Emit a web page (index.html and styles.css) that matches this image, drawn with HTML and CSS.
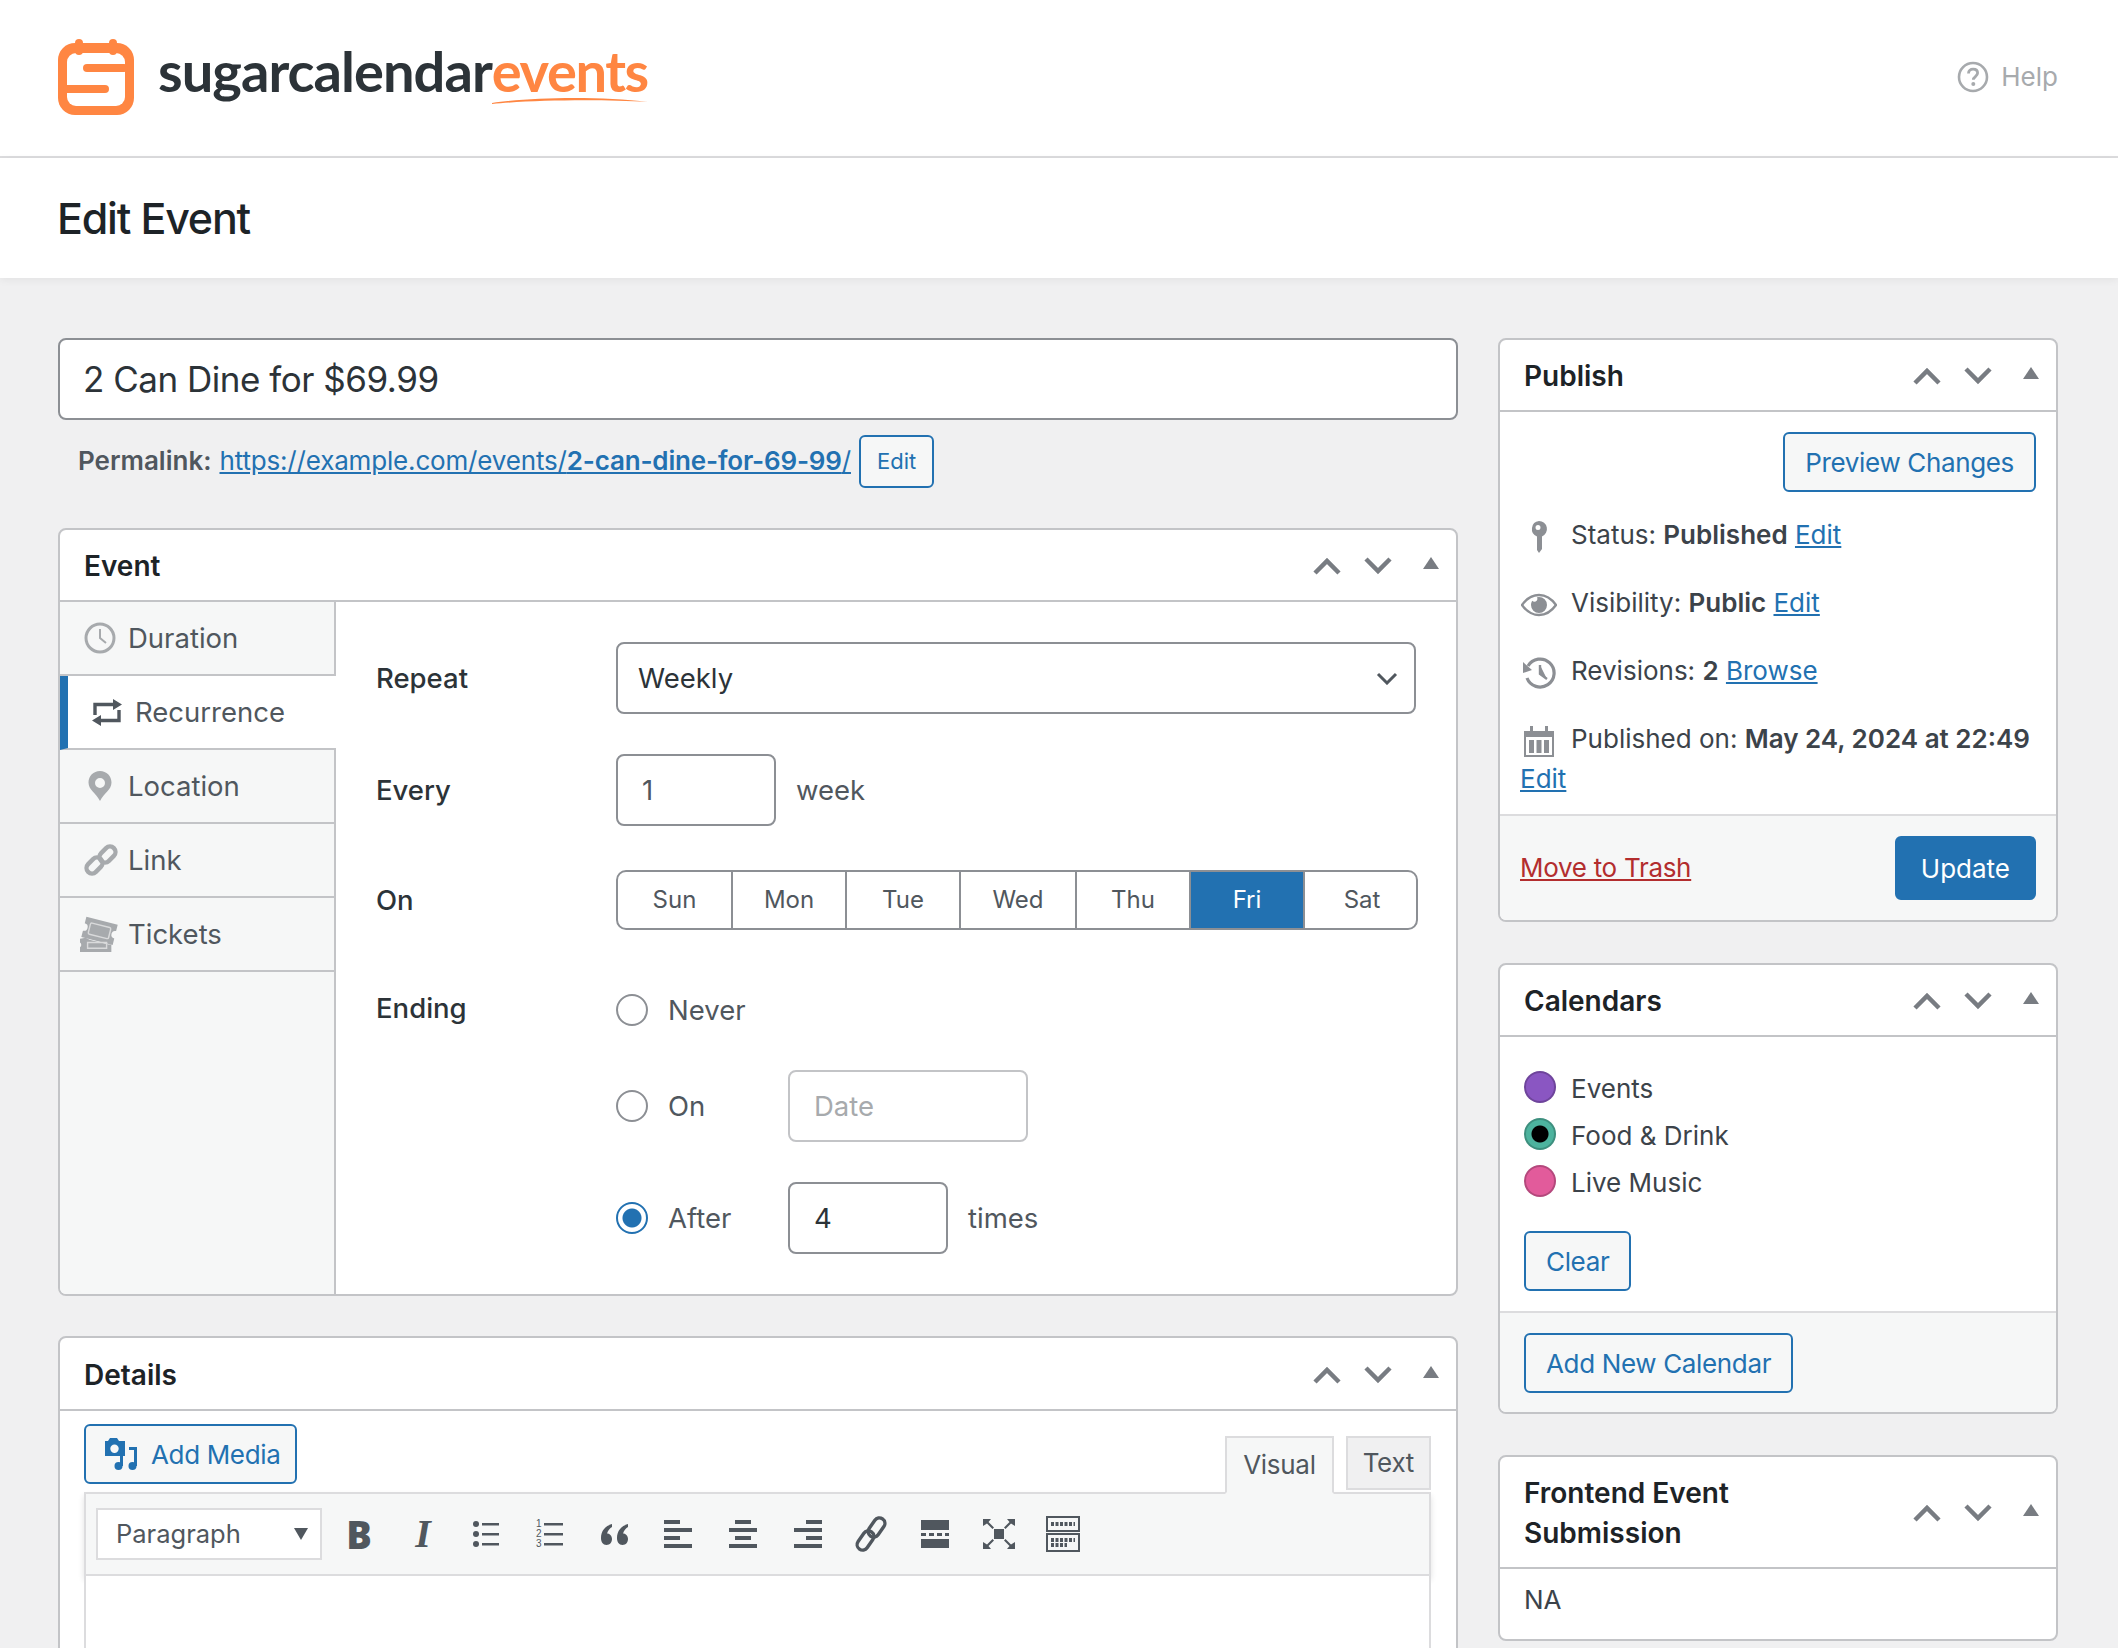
FILE: index.html
```html
<!DOCTYPE html>
<html lang="en">
<head>
  <meta charset="UTF-8" />
  <meta name="viewport" content="width=device-width, initial-scale=1.0"/>
  <title>Edit Event</title>
  <link rel="stylesheet" href="styles.css">
</head>
<body>
  <header class="topbar">
    <div class="brand">
      <svg class="brand-mark" viewBox="0 0 76 76">
        <rect y="4" width="76" height="72" rx="17" fill="#ff8642"/>
        <rect x="9" y="14" width="58" height="53" rx="9" fill="#fff"/>
        <rect x="25" y="25" width="45" height="8" rx="4" fill="#ff8642"/>
        <rect x="5" y="46" width="46" height="8" rx="4" fill="#ff8642"/>
        <rect x="17" y="0" width="8" height="16" rx="4" fill="#ff8642"/>
        <rect x="51" y="0" width="8" height="16" rx="4" fill="#ff8642"/>
      </svg>
      <span class="brand-name">sugarcalendar<span class="brand-events">events<svg class="brand-swoosh" viewBox="0 0 158 8" preserveAspectRatio="none"><path d="M0 7C40 1 110 0 158 6C110 3 40 4 0 8Z" fill="#ff8642"/></svg></span></span>
    </div>
    <div class="help">
      <svg width="32" height="32" viewBox="0 0 32 32"><circle cx="16" cy="16" r="14" fill="none" stroke="#a7aaad" stroke-width="2.6"/><path d="M11.5 12.5c0-2.700 2-4.300 4.600-4.300 2.700 0 4.500 1.600 4.500 3.900 0 3.400-4.300 3.500-4.300 6.700" fill="none" stroke="#a7aaad" stroke-width="2.800"/><circle cx="16.300" cy="23" r="2" fill="#a7aaad"/></svg>
      <span>Help</span>
    </div>
  </header>

  <div class="titlebar"><h1>Edit Event</h1></div>

  <div class="columns">
    <main>
      <div class="title-input">2 Can Dine for $69.99</div>
      <div class="permalink">
        <strong>Permalink:</strong>
        <a href="#">https://example.com/events/<b>2-can-dine-for-69-99</b>/</a>
        <button class="btn btn-small">Edit</button>
      </div>

      <section class="box box-event">
        <div class="box-head">
          <h2>Event</h2>
          <div class="handles">
            <svg class="chev" viewBox="0 0 28 18"><path d="M2 16L14 4L26 16" /></svg>
            <svg class="chev" viewBox="0 0 28 18"><path d="M2 2L14 14L26 2" /></svg>
            <svg class="tri" viewBox="0 0 16 12"><path d="M8 0L16 12H0Z"/></svg>
          </div>
        </div>
        <div class="event-body">
          <ul class="tabs">
            <li>
              <svg class="tab-icon" viewBox="0 0 32 32"><circle cx="16" cy="16" r="14" fill="none" stroke="#a7aaad" stroke-width="3"/><path d="M16 7v9l6 5" fill="none" stroke="#a7aaad" stroke-width="2"/></svg>
              Duration
            </li>
            <li class="active">
              <svg class="tab-icon tab-icon-repeat" viewBox="0 0 30 27"><path d="M3 16V5.500H22M27 11V21.500H8" fill="none" stroke="#50575e" stroke-width="3.400"/><path d="M21 0L30 5.500L21 11ZM9 16L0 21.500L9 27Z" fill="#50575e"/></svg>
              Recurrence
            </li>
            <li>
              <svg class="tab-icon" viewBox="0 0 32 32"><path fill-rule="evenodd" d="M16 1C9.500 1 4.500 6 4.500 12.500 4.500 20 12 23 16 31c4-8 11.500-11 11.500-18.500C27.500 6 22.500 1 16 1zm0 7a5 5 0 1 1 0 10 5 5 0 0 1 0-10z" fill="#a7aaad"/></svg>
              Location
            </li>
            <li>
              <svg class="tab-icon tab-icon-link" viewBox="0 0 34 34"><g fill="none" stroke="#a7aaad" stroke-width="4.400"><rect x="1.500" y="17" width="18" height="11" rx="5.500" transform="rotate(-45 10.500 22.500)"/><rect x="14.500" y="6" width="18" height="11" rx="5.500" transform="rotate(-45 23.500 11.500)"/></g></svg>
              Link
            </li>
            <li>
              <svg class="tab-icon tab-icon-ticket" viewBox="0 0 40 38"><g transform="rotate(14 22 14)"><path d="M4 5h34v7a4 4 0 0 0 0 8v7H4v-7a4 4 0 0 0 0-8z" fill="#a7aaad"/><rect x="10" y="10" width="22" height="12" rx="1.500" fill="none" stroke="#d9dadb" stroke-width="1.500"/></g><path d="M0 24l6-1 4 2 20 5h3v8H0v-5a3 3 0 0 0 0-5z" fill="#a7aaad"/><path d="M8 28h20v6H8z" fill="none" stroke="#d9dadb" stroke-width="1.500"/></svg>
              Tickets
            </li>
          </ul>
          <div class="event-form">
            <div class="row row-repeat">
              <label>Repeat</label>
              <div class="select">Weekly
                <svg width="22" height="13" viewBox="0 0 22 13"><path d="M2 2L11 11L20 2" fill="none" stroke="#50575e" stroke-width="3"/></svg>
              </div>
            </div>
            <div class="row row-every">
              <label>Every</label>
              <div class="inline">
                <div class="input">1</div>
                <span>week</span>
              </div>
            </div>
            <div class="row row-on">
              <label>On</label>
              <div class="days">
                <span>Sun</span><span>Mon</span><span>Tue</span><span class="day-wide">Wed</span><span>Thu</span><span class="day-on">Fri</span><span>Sat</span>
              </div>
            </div>
            <div class="row row-ending">
              <label>Ending</label>
              <div class="ending">
                <div class="end-row end-never"><i class="radio"></i><span>Never</span></div>
                <div class="end-row"><i class="radio"></i><span class="end-label">On</span><div class="input input-date">Date</div></div>
                <div class="end-row"><i class="radio radio-on"></i><span class="end-label">After</span><div class="input">4</div><span>times</span></div>
              </div>
            </div>
          </div>
        </div>
      </section>

      <section class="box box-details">
        <div class="box-head">
          <h2>Details</h2>
          <div class="handles">
            <svg class="chev" viewBox="0 0 28 18"><path d="M2 16L14 4L26 16" /></svg>
            <svg class="chev" viewBox="0 0 28 18"><path d="M2 2L14 14L26 2" /></svg>
            <svg class="tri" viewBox="0 0 16 12"><path d="M8 0L16 12H0Z"/></svg>
          </div>
        </div>
        <div class="editor-wrap">
          <div class="editor-top">
            <button class="btn btn-media">
              <svg width="36" height="36" viewBox="0 0 36 36"><path fill-rule="evenodd" d="M6 2h7l2 3h6v15H1V5h3zm4.500 6.500a4.200 4.200 0 1 0 0 8.400 4.200 4.200 0 0 0 0-8.400z" fill="#2271b1"/><circle cx="14.500" cy="30" r="4" fill="#2271b1"/><circle cx="28.500" cy="30" r="4" fill="#2271b1"/><path d="M17.500 30V20M31.500 30V12.500H25" fill="none" stroke="#2271b1" stroke-width="3"/></svg>
              Add Media
            </button>
            <div class="editor-tabs">
              <span class="etab etab-on">Visual</span>
              <span class="etab">Text</span>
            </div>
          </div>
          <div class="toolbar">
            <div class="format">Paragraph<i></i></div>
            <div class="tools">
              <span class="tool tool-b">B</span>
              <span class="tool tool-i">I</span>
              <svg class="tool" viewBox="0 0 40 40"><g fill="#50575e"><circle cx="9" cy="10" r="3"/><circle cx="9" cy="20" r="3"/><circle cx="9" cy="30" r="3"/><rect x="15" y="9" width="17" height="2.500"/><rect x="15" y="19" width="17" height="2.500"/><rect x="15" y="29" width="17" height="2.500"/></g></svg>
              <svg class="tool" viewBox="0 0 40 40"><g fill="#50575e" font-family="Liberation Sans, sans-serif" font-size="10"><text x="5" y="13">1</text><text x="5" y="23">2</text><text x="5" y="33">3</text><rect x="13" y="9" width="19" height="2.500"/><rect x="13" y="19" width="19" height="2.500"/><rect x="13" y="29" width="19" height="2.500"/></g></svg>
              <svg class="tool" viewBox="0 0 40 40"><path d="M17 10C10 12 6 17 6 24c0 4 2 7 5.500 7S17 28 17 25s-2-5.500-5-5.500c1-3 3-5.500 5-6.500zM33 10c-7 2-11 7-11 14 0 4 2 7 5.500 7s5.500-3 5.500-6-2-5.500-5-5.500c1-3 3-5.500 5-6.500z" fill="#50575e"/></svg>
              <svg class="tool" viewBox="0 0 40 40"><g fill="#50575e"><rect x="5" y="6" width="16" height="4"/><rect x="5" y="14" width="28" height="4"/><rect x="5" y="22" width="16" height="4"/><rect x="5" y="30" width="28" height="4"/></g></svg>
              <svg class="tool" viewBox="0 0 40 40"><g fill="#50575e"><rect x="12" y="6" width="16" height="4"/><rect x="6" y="14" width="28" height="4"/><rect x="12" y="22" width="16" height="4"/><rect x="6" y="30" width="28" height="4"/></g></svg>
              <svg class="tool" viewBox="0 0 40 40"><g fill="#50575e"><rect x="19" y="6" width="16" height="4"/><rect x="7" y="14" width="28" height="4"/><rect x="19" y="22" width="16" height="4"/><rect x="7" y="30" width="28" height="4"/></g></svg>
              <svg class="tool" viewBox="0 0 40 40"><g fill="none" stroke="#50575e" stroke-width="3.400"><rect x="4" y="21" width="21" height="11" rx="5.500" transform="rotate(-55 14.500 26.500)"/><rect x="15" y="8" width="21" height="11" rx="5.500" transform="rotate(-55 25.500 13.500)"/></g></svg>
              <svg class="tool" viewBox="0 0 40 40"><g fill="#50575e"><rect x="6" y="6" width="28" height="10"/><rect x="6" y="19" width="5" height="3"/><rect x="14" y="19" width="5" height="3"/><rect x="22" y="19" width="5" height="3"/><rect x="30" y="19" width="4" height="3"/><rect x="6" y="25" width="28" height="9"/></g></svg>
              <svg class="tool" viewBox="0 0 40 40"><g fill="#50575e"><rect x="15" y="15" width="10" height="10"/><path d="M4 5h8L9.500 8l5.500 5.500-1.500 1.500L8 9.500 4 12zM36 5h-8l2.500 3-5.500 5.500 1.500 1.500L32 9.500l4 2.500zM4 35h8l-2.500-3 5.500-5.500-1.500-1.500L8 30.500 4 28zM36 35h-8l2.500-3-5.500-5.500 1.500-1.500 5.500 5.500 4-2.500z"/></g></svg>
              <svg class="tool" viewBox="0 0 40 40"><g fill="none" stroke="#50575e"><rect x="4" y="3" width="32" height="14" stroke-width="2"/><rect x="4" y="20" width="32" height="17" stroke-width="2"/><path d="M8 10h24M8 26h24M8 31h16" stroke-width="4" stroke-dasharray="3 1.500"/></g></svg>
            </div>
          </div>
          <div class="editor-area"></div>
        </div>
      </section>
    </main>

    <aside>
      <section class="box box-publish">
        <div class="box-head">
          <h2>Publish</h2>
          <div class="handles">
            <svg class="chev" viewBox="0 0 28 18"><path d="M2 16L14 4L26 16" /></svg>
            <svg class="chev" viewBox="0 0 28 18"><path d="M2 2L14 14L26 2" /></svg>
            <svg class="tri" viewBox="0 0 16 12"><path d="M8 0L16 12H0Z"/></svg>
          </div>
        </div>
        <div class="preview-row"><button class="btn">Preview Changes</button></div>
        <div class="misc">
          <p><span class="misc-icon"><svg width="20" height="32" viewBox="0 0 20 32"><path fill-rule="evenodd" d="M10 0a8 8 0 0 1 3 15.400V28l-3 4-2-3V15.400A8 8 0 0 1 10 0zm-1 4a2.500 2.500 0 1 0 0 5 2.500 2.500 0 0 0 0-5z" fill="#8c8f94"/></svg></span>Status: <b>Published</b> <a href="#">Edit</a></p>
          <p><span class="misc-icon"><svg width="36" height="24" viewBox="0 0 36 24"><path d="M1 12C6 5 12 2 18 2s12 3 17 10c-5 7-11 10-17 10S6 19 1 12z" fill="none" stroke="#8c8f94" stroke-width="2.400"/><path d="M18 4a8 8 0 1 1-8 8c0-1.500.5-3 1.200-4.200a3 3 0 0 0 4.500 0 3 3 0 0 0 .3-3.500A8 8 0 0 1 18 4z" fill="#8c8f94"/></svg></span>Visibility: <b>Public</b> <a href="#">Edit</a></p>
          <p><span class="misc-icon"><svg width="34" height="32" viewBox="0 0 34 32"><path d="M6 9a14 14 0 1 1-1 12" fill="none" stroke="#8c8f94" stroke-width="3.200"/><path d="M1 5l9 8-9 3zM18 8v9l7 5" fill="#8c8f94"/><path d="M18 8v9l7 5" fill="none" stroke="#8c8f94" stroke-width="2.400"/></svg></span>Revisions: <b>2</b> <a href="#">Browse</a></p>
          <p><span class="misc-icon"><svg width="32" height="32" viewBox="0 0 32 32"><path d="M1 6h6V1h3v5h12V1h3v5h6v26H1z" fill="#8c8f94"/><rect x="3" y="12" width="26" height="18" fill="#fff"/><g fill="#8c8f94"><rect x="6" y="15" width="5" height="13"/><rect x="13.500" y="15" width="5" height="13"/><rect x="21" y="15" width="5" height="13"/></g></svg></span>Published on: <b>May 24, 2024 at 22:49</b> <a href="#">Edit</a></p>
        </div>
        <div class="box-foot foot-publish">
          <a class="trash" href="#">Move to Trash</a>
          <button class="btn btn-primary">Update</button>
        </div>
      </section>

      <section class="box box-calendars">
        <div class="box-head">
          <h2>Calendars</h2>
          <div class="handles">
            <svg class="chev" viewBox="0 0 28 18"><path d="M2 16L14 4L26 16" /></svg>
            <svg class="chev" viewBox="0 0 28 18"><path d="M2 2L14 14L26 2" /></svg>
            <svg class="tri" viewBox="0 0 16 12"><path d="M8 0L16 12H0Z"/></svg>
          </div>
        </div>
        <div class="cal-list">
          <div class="cal"><i class="dot dot-purple"></i>Events</div>
          <div class="cal"><i class="dot dot-green"></i>Food &amp; Drink</div>
          <div class="cal"><i class="dot dot-pink"></i>Live Music</div>
          <button class="btn btn-clear">Clear</button>
        </div>
        <div class="box-foot foot-cal"><button class="btn">Add New Calendar</button></div>
      </section>

      <section class="box box-frontend">
        <div class="box-head">
          <h2>Frontend Event Submission</h2>
          <div class="handles">
            <svg class="chev" viewBox="0 0 28 18"><path d="M2 16L14 4L26 16" /></svg>
            <svg class="chev" viewBox="0 0 28 18"><path d="M2 2L14 14L26 2" /></svg>
            <svg class="tri" viewBox="0 0 16 12"><path d="M8 0L16 12H0Z"/></svg>
          </div>
        </div>
        <div class="frontend-body">NA</div>
      </section>
    </aside>
  </div>
</body>
</html>
```

FILE: styles.css
```css
* {
  margin: 0;
  padding: 0;
  box-sizing: border-box;
}

html, body {
  height: 100%;
  overflow: hidden;
}

body {
  background: #f0f0f1;
  color: #3c434a;
  font-family: Inter, "Liberation Sans", sans-serif;
  font-size: 26px;
  line-height: 40px;
}

a {
  color: #2271b1;
}

ul {
  list-style: none;
}

/* top bars */
.topbar {
  height: 158px;
  background: #fff;
  border-bottom: 2px solid #dcdcde;
  padding: 39px 60px 0 58px;
  display: flex;
  justify-content: space-between;
  align-items: flex-start;
}

.brand {
  display: flex;
  align-items: flex-start;
}

.brand-mark {
  width: 76px;
  height: 76px;
}

.brand-name {
  margin-left: 24px;
  font-family: Lato, sans-serif;
  font-weight: 700;
  font-size: 56px;
  line-height: 64px;
  letter-spacing: -0.95px;
  color: #2c3338;
}

.brand-events {
  position: relative;
  color: #ff8642;
  letter-spacing: -1.4px;
}

.brand-swoosh {
  position: absolute;
  left: 0;
  top: 59px;
  width: 100%;
  height: 8px;
}

.help {
  display: flex;
  align-items: center;
  gap: 12px;
  margin-top: 18px;
  color: #a7aaad;
  font-size: 26px;
}

.titlebar {
  height: 120px;
  background: #fff;
  padding-left: 57px;
  box-shadow: 0 2px 8px rgba(0, 0, 0, 0.06);
  display: flex;
  align-items: center;
}

.titlebar h1 {
  font-size: 43px;
  font-weight: 500;
  letter-spacing: -1.2px;
  color: #1d2327;
}

/* columns */
.columns {
  display: grid;
  grid-template-columns: 1400px 560px;
  gap: 40px;
  height: calc(100vh - 278px);
  overflow: hidden;
  padding: 60px 60px 0 58px;
}

.title-input {
  height: 82px;
  background: #fff;
  border: 2px solid #8c8f94;
  border-radius: 8px;
  padding: 0 23px;
  font-size: 35px;
  letter-spacing: -0.48px;
  line-height: 78px;
  color: #2c3338;
}

.permalink {
  display: flex;
  align-items: center;
  gap: 8px;
  height: 54px;
  margin-top: 14px;
  padding-left: 20px;
  color: #50575e;
}

.permalink strong {
  font-weight: 600;
}

.permalink a {
  letter-spacing: -0.17px;
}

.permalink a b {
  font-weight: 600;
}

.btn {
  height: 60px;
  padding: 0 20px;
  background: #f6f7f7;
  border: 2px solid #2271b1;
  border-radius: 6px;
  color: #2271b1;
  font-family: inherit;
  font-size: 26px;
  letter-spacing: -0.35px;
}

.btn-small {
  height: 53px;
  padding: 0 16px;
  font-size: 22px;
  letter-spacing: 0;
}

.btn-primary {
  height: 64px;
  padding: 0 24px;
  background: #2271b1;
  color: #fff;
  letter-spacing: 0;
}

/* boxes */
.box {
  background: #fff;
  border: 2px solid #c3c4c7;
  border-radius: 8px;
  overflow: hidden;
}

.box-head {
  display: flex;
  align-items: center;
  justify-content: space-between;
  min-height: 72px;
  padding: 2px 17px 0 24px;
  border-bottom: 2px solid #c3c4c7;
}

.box-head h2 {
  font-size: 28px;
  font-weight: 600;
  color: #1d2327;
}

.handles {
  display: flex;
  align-items: center;
  gap: 23px;
  flex: none;
}

.chev {
  width: 28px;
  height: 18px;
}

.chev path {
  fill: none;
  stroke: #787c82;
  stroke-width: 4.500;
}

.tri {
  width: 16px;
  height: 12px;
  margin-left: 8px;
  margin-bottom: 6px;
  fill: #787c82;
}

.box-event {
  margin-top: 40px;
  height: 768px;
}

.event-body {
  display: flex;
  height: 692px;
}

.tabs {
  width: 276px;
  flex: none;
  background: #f6f7f7;
  border-right: 2px solid #c3c4c7;
}

.tabs li {
  height: 74px;
  display: flex;
  align-items: center;
  gap: 12px;
  padding-left: 24px;
  border-bottom: 2px solid #c3c4c7;
  font-size: 27.5px;
  color: #50575e;
}

.tabs li.active {
  width: 276px;
  gap: 13px;
  background: #fff;
  border-left: 8px solid #2271b1;
}

.tab-icon {
  width: 32px;
  height: 32px;
  flex: none;
}

.tab-icon-repeat {
  width: 30px;
  height: 27px;
}

.tab-icon-link {
  width: 34px;
  height: 34px;
  margin-right: -2px;
}

.tab-icon-ticket {
  width: 38px;
  height: 38px;
  margin-left: -4px;
  margin-right: -2px;
}

.event-form {
  flex: 1;
  padding: 40px 40px 0 40px;
  color: #2c3338;
  font-size: 27.5px;
}

.row {
  display: grid;
  grid-template-columns: 240px 1fr;
  align-items: center;
}

.row label {
  color: #2c3338;
  font-weight: 500;
}

.row-every {
  margin-top: 40px;
}

.row-on {
  margin-top: 44px;
}

.row-ending {
  margin-top: 60px;
  align-items: start;
}

.row-ending label {
  margin-top: -2px;
}

.select {
  width: 800px;
  height: 72px;
  border: 2px solid #8c8f94;
  border-radius: 8px;
  padding: 0 16px 0 20px;
  display: flex;
  align-items: center;
  justify-content: space-between;
}

.input {
  width: 160px;
  height: 72px;
  border: 2px solid #8c8f94;
  border-radius: 8px;
  padding: 0 24px;
  display: flex;
  align-items: center;
}

.input-date {
  width: 240px;
  border-color: #c3c4c7;
  color: #a7aaad;
}

.inline {
  display: flex;
  align-items: center;
  gap: 20px;
  color: #50575e;
}

.days {
  display: grid;
  grid-template-columns: 115px 114px 114px 116px 114px 114px 114px;
  height: 60px;
  width: 802px;
  border: 2px solid #8c8f94;
  border-radius: 10px;
  overflow: hidden;
  font-size: 24px;
  color: #50575e;
}

.days span {
  display: flex;
  align-items: center;
  justify-content: center;
  border-right: 2px solid #8c8f94;
}

.days span:last-child {
  border-right: none;
}

.days .day-on {
  background: #2271b1;
  color: #fff;
}

.ending {
  display: flex;
  flex-direction: column;
  gap: 40px;
  color: #50575e;
}

.end-row {
  display: flex;
  align-items: center;
}

.end-never {
  height: 40px;
}

.end-label {
  width: 120px;
}

.end-row span {
  margin-left: 20px;
}

.end-row .input {
  color: #2c3338;
}

.end-row .input-date {
  color: #a7aaad;
}

.radio {
  width: 32px;
  height: 32px;
  flex: none;
  border: 2px solid #8c8f94;
  border-radius: 50%;
  background: #fff;
}

.radio-on {
  border-color: #2271b1;
  background: radial-gradient(circle, #2271b1 0, #2271b1 9px, #fff 10px);
}

/* details */
.box-details {
  margin-top: 40px;
  height: 600px;
}

.box-details .box-head {
  min-height: 73px;
}

.editor-wrap {
  padding: 0 25px 0 24px;
}

.editor-top {
  display: flex;
  justify-content: space-between;
  align-items: flex-end;
  height: 81px;
}

.btn-media {
  height: 60px;
  display: flex;
  align-items: center;
  gap: 11px;
  padding: 0 15px 0 18px;
  margin-bottom: 8px;
}

.editor-tabs {
  display: flex;
  gap: 12px;
  margin-bottom: -2px;
  position: relative;
  z-index: 1;
  letter-spacing: -0.3px;
}

.etab {
  height: 54px;
  padding: 0 15px;
  background: #f0f0f1;
  border: 2px solid #dcdcde;
  color: #50575e;
  line-height: 50px;
}

.etab-on {
  height: 58px;
  padding: 0 16px;
  background: #f6f7f7;
  border-bottom-color: #f6f7f7;
  line-height: 54px;
}

.toolbar {
  height: 84px;
  display: flex;
  align-items: center;
  padding-left: 10px;
  background: #f6f7f7;
  border: 2px solid #dcdcde;
  box-shadow: 0 4px 6px rgba(0, 0, 0, 0.12);
}

.format {
  width: 226px;
  height: 52px;
  display: flex;
  align-items: center;
  justify-content: space-between;
  padding: 0 12px 0 18px;
  background: #fff;
  border: 2px solid #dcdcde;
  font-size: 25.5px;
  color: #50575e;
}

.format i {
  border-left: 7px solid transparent;
  border-right: 7px solid transparent;
  border-top: 12px solid #50575e;
}

.tools {
  display: flex;
  align-items: center;
  gap: 24px;
  margin-left: 17px;
}

.tool {
  width: 40px;
  height: 40px;
  color: #50575e;
  text-align: center;
}

.tool-b {
  font-family: "Open Sans", sans-serif;
  font-weight: 800;
  font-size: 38px;
}

.tool-i {
  font-family: "Liberation Serif", serif;
  font-weight: 700;
  font-style: italic;
  font-size: 40px;
}

.editor-area {
  height: 300px;
  background: #fff;
  border: 2px solid #dcdcde;
  border-top: none;
}

/* sidebar */
aside {
  display: flex;
  flex-direction: column;
}

.box-publish {
  height: 584px;
  flex: none;
  display: flex;
  flex-direction: column;
}

.preview-row {
  display: flex;
  justify-content: flex-end;
  padding: 20px 20px 0;
}

.misc {
  padding: 23px 8px 0 20px;
  flex: 1;
}

.misc p {
  margin-bottom: 28px;
}

.misc p:last-child {
  margin-bottom: 0;
}

.misc b {
  font-weight: 600;
}

.misc-icon {
  display: inline-flex;
  justify-content: center;
  align-items: center;
  width: 38px;
  height: 32px;
  margin-right: 13px;
  vertical-align: middle;
}

.box-foot {
  background: #f6f7f7;
  border-top: 2px solid #dcdcde;
}

.foot-publish {
  display: flex;
  justify-content: space-between;
  align-items: center;
  padding: 20px;
}

.trash {
  color: #b32d2e;
  letter-spacing: -0.3px;
}

.box-calendars {
  margin-top: 41px;
  height: 451px;
  flex: none;
}

.cal-list {
  height: 274px;
  padding: 28px 24px 0;
  display: flex;
  flex-direction: column;
  align-items: flex-start;
}

.cal {
  height: 47px;
  display: flex;
  align-items: center;
  gap: 15px;
}

.dot {
  width: 32px;
  height: 32px;
  border-radius: 50%;
  border: 2px solid rgba(0, 0, 0, 0.2);
  margin-top: -4px;
}

.dot-purple {
  background: #8a56c2;
}

.dot-green {
  background: radial-gradient(circle, #000 0, #000 8px, #4db39e 9px);
}

.dot-pink {
  background: #e25b9b;
}

.btn-clear {
  margin-top: 25px;
}

.foot-cal {
  padding: 20px 24px;
}

.box-frontend {
  margin-top: 41px;
  height: 186px;
  flex: none;
}

.box-frontend .box-head h2 {
  width: 340px;
}

.box-frontend .box-head {
  height: 112px;
}

.frontend-body {
  padding: 11px 24px;
}
```
